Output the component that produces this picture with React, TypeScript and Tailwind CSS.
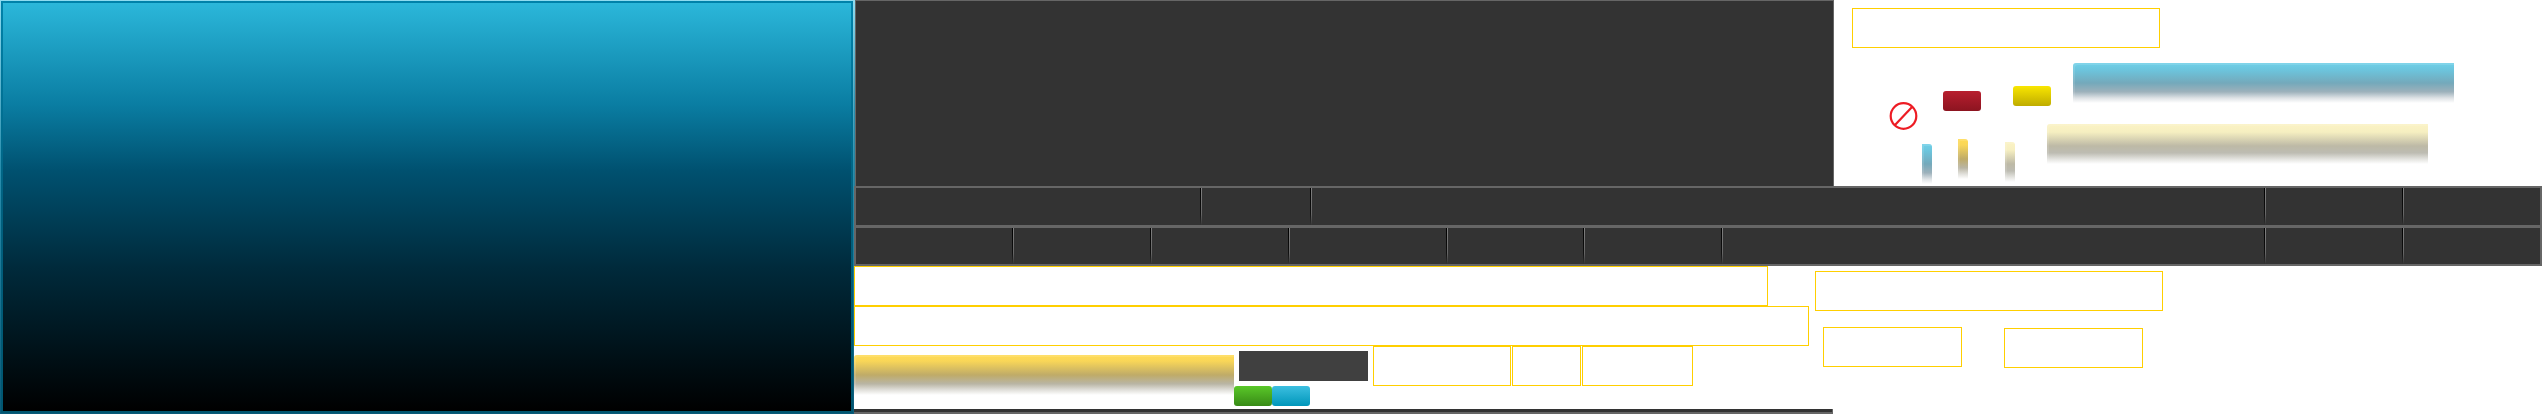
import React from "react";

function Bar({ kind, w, small }: { kind: "blue" | "gold" | "cream"; w: string; small?: boolean }) {
  const skins = {
    blue: "bg-[linear-gradient(#6fd0e8,#6cc4dc_18%,#74a9bb_50%,#9db1bb_72%,#dfe3e6_88%,#ffffff)]",
    gold: "bg-[linear-gradient(#ffdb55,#f9d658_15%,#bfab68_50%,#b9b5a4_72%,#e2e1dc_88%,#ffffff)]",
    cream: "bg-[linear-gradient(#fbf3c4,#f6efc1_20%,#bdb9a6_55%,#bdbcb2_72%,#e4e4e0_88%,#ffffff)]",
  };
  const corner = small ? "rounded-tr-[3px]" : "rounded-tl-[3px]";
  return (
    <div
      className={`h-[40px] shadow-[inset_2px_2px_0_rgba(255,255,255,0.12)] ${corner} ${w} ${skins[kind]}`}
    />
  );
}

function Btn({ color }: { color: string }) {
  return <div className={`w-[38px] h-[20px] rounded-[3px] ${color}`} />;
}

function Outline({ className }: { className: string }) {
  return <div className={`h-[40px] shrink-0 border border-[#ffcf00] bg-white ${className}`} />;
}

function Divider() {
  return (
    <div className="flex w-[2px] shrink-0">
      <div className="w-px bg-[linear-gradient(#000000,#111111_70%,#333333)]" />
      <div className="w-px bg-[linear-gradient(#808080,#666666_70%,#333333)]" />
    </div>
  );
}

function Row({ cells, className }: { cells: string[]; className: string }) {
  return (
    <div className={`flex w-[1688px] bg-[#333333] border-[#666666] border-x-2 ${className}`}>
      {cells.map((w, i) => (
        <React.Fragment key={i}>
          {i > 0 && <Divider />}
          <div className={w} />
        </React.Fragment>
      ))}
    </div>
  );
}

export default function App() {
  return (
    <div className="flex w-[2543px] h-[414px] overflow-hidden bg-white">
      <div className="w-[854px] h-[414px] shrink-0 p-px bg-[linear-gradient(#8fdcf0,#2a8fae_40%,#0b5a78)]">
        <div className="h-full p-[2px] bg-[linear-gradient(#0082aa,#00607f_50%,#005670)]">
          <div className="h-full bg-[linear-gradient(#2bb7da,#0a7da2_25%,#005170_41%,#002a3b_65%,#000000)]" />
        </div>
      </div>

      <div className="flex flex-col w-[1689px] shrink-0">
        <div className="flex h-[186px]">
          <div className="w-px shrink-0 bg-[linear-gradient(#8fdcf0,#2a8fae_60%,#2a7d96)]" />
          <div className="w-[979px] shrink-0 bg-[#333333] border-t border-x border-[#666666]" />
          <div className="flex flex-col flex-1">
            <Outline className="w-[308px] mt-[8px] ml-[18px]" />
            <div className="flex mt-[15px] ml-[55px]">
              <div className="w-[29px] mt-[39px] shrink-0">
                <svg width="29" height="28" viewBox="0 0 29 28" fill="none">
                  <circle cx="14.5" cy="14" r="12.8" stroke="#ed1c24" strokeWidth="2.2" />
                  <line x1="6" y1="23" x2="23" y2="5" stroke="#ed1c24" strokeWidth="2.2" />
                </svg>
              </div>
              <div className="w-[10px] ml-[4px] mt-[81px] shrink-0">
                <Bar kind="blue" w="w-[10px]" small />
              </div>
              <div className="w-[38px] ml-[11px] mt-[28px] shrink-0">
                <Btn color="bg-[linear-gradient(#b81f2f,#8c1420)]" />
                <div className="mt-[28px] ml-[15px]">
                  <Bar kind="gold" w="w-[10px]" small />
                </div>
              </div>
              <div className="flex flex-col ml-[24px] shrink-0">
                <div className="flex">
                  <div className="ml-[8px] mt-[23px]">
                    <Btn color="bg-[linear-gradient(#f9e600,#bfac00)]" />
                  </div>
                  <div className="ml-[22px]">
                    <Bar kind="blue" w="w-[381px]" />
                  </div>
                </div>
                <div className="flex mt-[18px]">
                  <div className="mt-[18px]">
                    <Bar kind="cream" w="w-[10px]" small />
                  </div>
                  <div className="ml-[32px]">
                    <Bar kind="cream" w="w-[381px]" />
                  </div>
                </div>
              </div>
            </div>
          </div>
        </div>

        <div className="flex flex-col flex-1">
          <Row
            className="h-[40px] border-t-2 border-b"
            cells={["w-[344px]", "w-[108px]", "w-[952px]", "w-[136px]", "flex-1"]}
          />
          <Row
            className="h-[40px] border-t-2 border-b-2"
            cells={[
              "w-[156px]",
              "w-[136px]",
              "w-[136px]",
              "w-[156px]",
              "w-[135px]",
              "w-[136px]",
              "w-[541px]",
              "w-[136px]",
              "flex-1",
            ]}
          />

          <div className="flex h-[143px]">
            <div className="flex flex-col w-[955px] shrink-0">
              <Outline className="w-[914px]" />
              <Outline className="w-[955px]" />
              <div className="flex">
                <div className="w-[380px] shrink-0 mt-[9px]">
                  <Bar kind="gold" w="w-[380px]" />
                </div>
                <div className="flex flex-col shrink-0">
                  <div className="w-[129px] h-[30px] ml-[5px] mt-[5px] bg-[#404040]" />
                  <div className="flex mt-[5px]">
                    <Btn color="bg-[linear-gradient(#5ac829,#388a16)]" />
                    <Btn color="bg-[linear-gradient(#3cbfe0,#0096ba)]" />
                  </div>
                </div>
                <Outline className="w-[138px] ml-[5px]" />
                <Outline className="w-[69px] ml-px" />
                <Outline className="w-[111px] ml-px" />
              </div>
            </div>
            <div className="flex flex-col">
              <Outline className="w-[348px] ml-[6px] mt-[5px]" />
              <div className="flex items-start mt-[16px] ml-[14px]">
                <Outline className="w-[139px]" />
                <Outline className="w-[139px] ml-[42px] mt-px" />
              </div>
            </div>
          </div>
          <div className="w-[979px] h-[5px] bg-[#333333] border-b-2 border-r border-[#666666]" />
        </div>
      </div>
    </div>
  );
}
